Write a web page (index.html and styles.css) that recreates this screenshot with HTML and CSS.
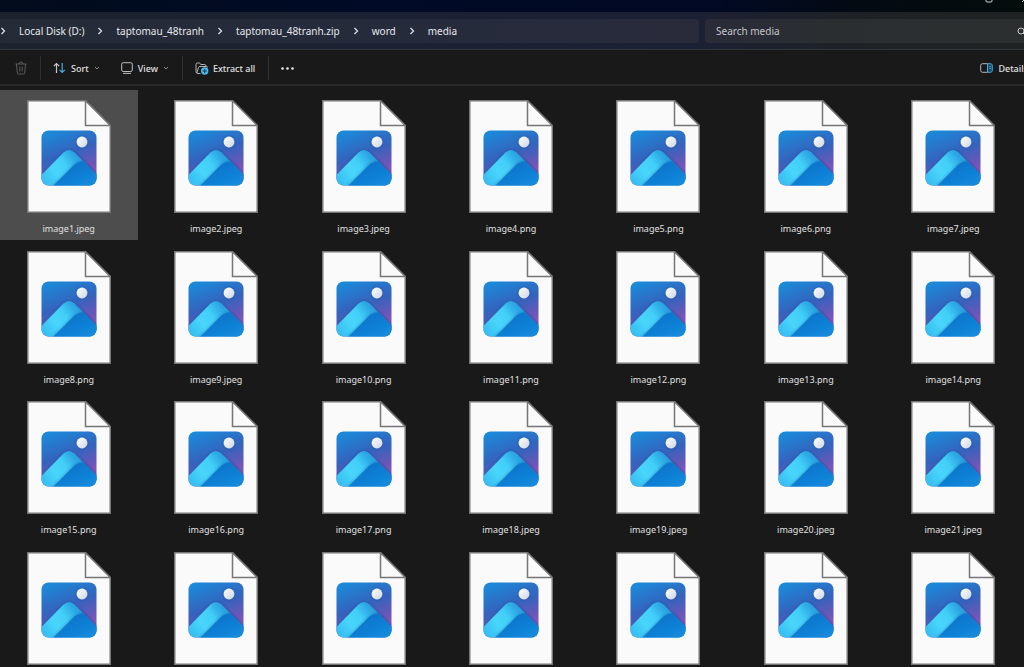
FILE: index.html
```
<!DOCTYPE html>
<html lang="en">
<head>
<meta charset="utf-8">
<title>media</title>
<link rel="stylesheet" href="styles.css">
</head>
<body>
<svg class="defs" aria-hidden="true">
  <defs>
    <linearGradient id="sky" x1="0.3" y1="0" x2="0.62" y2="0.85">
      <stop offset="0" stop-color="#1c88d8"/><stop offset="0.5" stop-color="#3563bd"/><stop offset="0.85" stop-color="#6b57b8"/><stop offset="1" stop-color="#8158bb"/>
    </linearGradient>
    <linearGradient id="slope" x1="0.9" y1="0.4" x2="0.1" y2="0.8">
      <stop offset="0" stop-color="#1f90d8"/><stop offset="0.25" stop-color="#30aee8"/><stop offset="0.45" stop-color="#42cff8"/><stop offset="0.7" stop-color="#48d5fb"/><stop offset="1" stop-color="#38bff2"/>
    </linearGradient>
    <linearGradient id="front" x1="0.3" y1="0.2" x2="0.9" y2="1">
      <stop offset="0" stop-color="#0f74cc"/><stop offset="1" stop-color="#1390e0"/>
    </linearGradient>
    <linearGradient id="sun" x1="0" y1="0" x2="1" y2="1">
      <stop offset="0" stop-color="#ffffff"/><stop offset="1" stop-color="#ced5e4"/>
    </linearGradient>
    <filter id="shade" x="-20%" y="-20%" width="140%" height="140%"><feDropShadow dx="0" dy="0" stdDeviation="1.5" flood-color="#123a80" flood-opacity="0.5"/></filter>
    <clipPath id="frame"><rect x="14.5" y="30.5" width="55" height="55" rx="7"/></clipPath>
    <symbol id="picture" viewBox="0 0 84 113">
      <path d="M.75.75H58.5L83.25 25.5V112.25H.75Z" fill="#fafafa" stroke="#767676" stroke-width="1.5"/>
      <path d="M58.5.75V25.5H83.25Z" fill="#fafafa" stroke="#767676" stroke-width="1.5"/>
      <g clip-path="url(#frame)">
        <rect x="14" y="30" width="56" height="56" fill="url(#sky)"/>
        <path d="M12 77.500L36.500 52.500Q42 47.500 47.500 52.500L72 77V90H12Z" fill="url(#slope)" filter="url(#shade)"/>
        <path d="M23 89L45.500 66.500Q50 61.500 56.500 61.500L72 77V90H23Z" fill="url(#front)" filter="url(#shade)"/>
        <circle cx="55" cy="42" r="5.400" fill="url(#sun)" filter="url(#shade)"/>
      </g>
    </symbol>
    <symbol id="next" viewBox="0 0 6 8"><path d="M1.500 1L4.500 4L1.500 7" fill="none" stroke="#dcdee4" stroke-width="1.300"/></symbol>
    <symbol id="drop" viewBox="0 0 6 4"><path d="M1 1L3 3L5 1" fill="none" stroke="#999" stroke-width="0.900"/></symbol>
  </defs>
</svg>

<div class="window">
  <div class="titlebar">
    <button class="caption" aria-label="Maximize"><svg width="8" height="8" viewBox="0 0 8 8"><rect x="1" y="1" width="6" height="6" rx="1" fill="none" stroke="#d0d0d0"/></svg></button>
    <button class="caption" aria-label="Close"><svg width="8" height="8" viewBox="0 0 8 8"><path d="M1 1L7 7M7 1L1 7" stroke="#d0d0d0"/></svg></button>
  </div>
  <div class="address-row">
    <nav class="address" aria-label="Address">
      <svg class="next"><use href="#next"/></svg>
      <a href="#">Local Disk (D:)</a>
      <svg class="next"><use href="#next"/></svg>
      <a href="#">taptomau_48tranh</a>
      <svg class="next"><use href="#next"/></svg>
      <a href="#">taptomau_48tranh.zip</a>
      <svg class="next"><use href="#next"/></svg>
      <a href="#">word</a>
      <svg class="next"><use href="#next"/></svg>
      <a href="#">media</a>
    </nav>
    <div class="search">
      <input type="text" placeholder="Search media" aria-label="Search media">
      <svg width="9" height="9" viewBox="0 0 9 9" fill="none" stroke="#ccc"><circle cx="4" cy="4" r="3"/><path d="M6 6L8.500 8.500"/></svg>
    </div>
  </div>
  <div class="toolbar">
    <button class="tool" aria-label="Delete"><svg width="12" height="14" viewBox="0 0 12 14" fill="none" stroke="#5c5c5c"><path d="M.5 3H11.500M4 3Q4 1 6 1Q8 1 8 3M1.500 3L2.300 12Q2.400 13 3.500 13H8.500Q9.600 13 9.700 12L10.500 3M4.800 5.500V10.500M7.200 5.500V10.500"/></svg></button>
    <span class="rule"></span>
    <button class="tool sort"><svg width="13" height="12" viewBox="0 0 13 12" fill="none" stroke-width="1.200"><path d="M3.500 11V1.500M.8 4.200L3.500 1.500L6.200 4.200" stroke="#c5c5c5"/><path d="M9.200 1V10.500M6.500 7.800L9.200 10.500L11.900 7.800" stroke="#4ba9d6"/></svg>Sort<svg class="drop"><use href="#drop"/></svg></button>
    <button class="tool view"><svg width="12" height="12" viewBox="0 0 12 12" fill="none" stroke="#bdbdbd"><rect x=".7" y=".7" width="10.600" height="8.800" rx="1.500"/><path d="M2 11.400H10"/></svg>View<svg class="drop"><use href="#drop"/></svg></button>
    <span class="rule"></span>
    <button class="tool extract"><svg width="14" height="13" viewBox="0 0 14 13" fill="none"><path d="M5.500 11.500H3Q1 11.500 1 9.500V2.500Q1 1 2.500 1H4.300L6 2.500H9.500Q11 2.500 11 4M1.800 11L3.500 5.500Q3.800 4.500 5 4.500H11.500Q12.700 4.500 12.500 5.500" stroke="#b5b5b5"/><circle cx="9.700" cy="9" r="3.700" fill="#4cb8f0"/><path d="M9.700 6.800V11.200M7.500 9H11.900" stroke="#103850"/></svg>Extract all</button>
    <span class="rule"></span>
    <button class="tool more" aria-label="See more"><svg width="13" height="3" viewBox="0 0 13 3" fill="#ececec"><circle cx="1.500" cy="1.500" r="1.300"/><circle cx="6.500" cy="1.500" r="1.300"/><circle cx="11.500" cy="1.500" r="1.300"/></svg></button>
    <button class="tool details"><svg width="13" height="10" viewBox="0 0 13 10" fill="none"><path d="M7.500.7H2.500Q.7.700.7 2.500V7.500Q.7 9.300 2.500 9.300H7.500" stroke="#b5b5b5"/><path d="M7.500.7H10.500Q12.300.7 12.300 2.500V7.500Q12.300 9.300 10.500 9.300H7.500Z" fill="#164b69" stroke="#4ba9d6"/><path d="M9.300 3.500H10.800M9.300 5.500H10.800" stroke="#4ba9d6"/></svg>Details</button>
  </div>
</div>

<main class="files">
  <button class="file selected"><svg><use href="#picture"/></svg><span>image1.jpeg</span></button>
  <button class="file"><svg><use href="#picture"/></svg><span>image2.jpeg</span></button>
  <button class="file"><svg><use href="#picture"/></svg><span>image3.jpeg</span></button>
  <button class="file"><svg><use href="#picture"/></svg><span>image4.png</span></button>
  <button class="file"><svg><use href="#picture"/></svg><span>image5.png</span></button>
  <button class="file"><svg><use href="#picture"/></svg><span>image6.png</span></button>
  <button class="file"><svg><use href="#picture"/></svg><span>image7.jpeg</span></button>
  <button class="file"><svg><use href="#picture"/></svg><span>image8.png</span></button>
  <button class="file"><svg><use href="#picture"/></svg><span>image9.jpeg</span></button>
  <button class="file"><svg><use href="#picture"/></svg><span>image10.png</span></button>
  <button class="file"><svg><use href="#picture"/></svg><span>image11.png</span></button>
  <button class="file"><svg><use href="#picture"/></svg><span>image12.png</span></button>
  <button class="file"><svg><use href="#picture"/></svg><span>image13.png</span></button>
  <button class="file"><svg><use href="#picture"/></svg><span>image14.png</span></button>
  <button class="file"><svg><use href="#picture"/></svg><span>image15.png</span></button>
  <button class="file"><svg><use href="#picture"/></svg><span>image16.png</span></button>
  <button class="file"><svg><use href="#picture"/></svg><span>image17.png</span></button>
  <button class="file"><svg><use href="#picture"/></svg><span>image18.jpeg</span></button>
  <button class="file"><svg><use href="#picture"/></svg><span>image19.jpeg</span></button>
  <button class="file"><svg><use href="#picture"/></svg><span>image20.jpeg</span></button>
  <button class="file"><svg><use href="#picture"/></svg><span>image21.jpeg</span></button>
  <button class="file" aria-label="Image file"><svg><use href="#picture"/></svg></button>
  <button class="file" aria-label="Image file"><svg><use href="#picture"/></svg></button>
  <button class="file" aria-label="Image file"><svg><use href="#picture"/></svg></button>
  <button class="file" aria-label="Image file"><svg><use href="#picture"/></svg></button>
  <button class="file" aria-label="Image file"><svg><use href="#picture"/></svg></button>
  <button class="file" aria-label="Image file"><svg><use href="#picture"/></svg></button>
  <button class="file" aria-label="Image file"><svg><use href="#picture"/></svg></button>
</main>
</body>
</html>
```
FILE: styles.css
```
* { box-sizing: border-box; }
body {
  margin: 0;
  height: 100vh;
  overflow: hidden;
  background: #191919;
  color: #e0e0e0;
  font-family: "Noto Sans", "Open Sans", sans-serif;
  font-size: 9px;
}
button, input {
  border: 0;
  padding: 0;
  background: none;
  color: inherit;
  font: inherit;
}
svg { flex: none; }
.defs { position: absolute; width: 0; height: 0; }

/* The window runs on past the right edge of the screen. */
.window { margin-right: -24px; }

.titlebar {
  display: flex;
  justify-content: flex-end;
  align-items: flex-start;
  gap: 28px;
  height: 12px;
  padding-right: 19px;
  background: linear-gradient(90deg, #020c1c, #010a26 35%, #010924 68%, #030a12 82%, #040c0a);
}
.caption { height: 8px; margin-top: -5px; line-height: 0; }

.address-row {
  display: flex;
  gap: 6px;
  height: 38px;
  padding: 7px 0 6px;
  background: linear-gradient(90deg, #1c232d, #1b2233 35%, #1c2034 66%, #1e2227 80%, #1f2322);
  border-bottom: 1px solid #323437;
}
.address {
  display: flex;
  flex: 1;
  align-items: center;
  gap: 13px;
  border-radius: 0 4px 4px 0;
  background: linear-gradient(90deg, #252b36, #252b3b 50%, #292b3b);
  font-size: 10px;
}
.address a { color: #e6e8ec; text-decoration: none; }
.next { width: 6px; height: 8px; }
.search {
  display: flex;
  align-items: center;
  width: 343px;
  padding: 0 22px 0 11px;
  border-radius: 4px;
  background: linear-gradient(90deg, #292b38, #2a2e31 35%, #2b2f2e);
}
.search input { flex: 1; min-width: 0; font-size: 10px; }
.search input::placeholder { color: #c4c6ca; opacity: 1; }

.toolbar {
  display: flex;
  align-items: center;
  height: 36px;
  padding: 2px 20px 0 15px;
  border-bottom: 2px solid #292929;
}
.tool { display: flex; align-items: center; gap: 5px; font-weight: 500; white-space: nowrap; }
.rule { width: 1px; height: 24px; margin: 0 12px 0 13px; background: #303030; }
.drop { width: 6px; height: 4px; }
.view { margin-left: 21px; }
.extract { gap: 4px; }
.more { height: 20px; }
.details { margin-left: auto; }

.files {
  display: grid;
  grid-template-columns: repeat(7, minmax(0, 1fr));
  grid-auto-rows: 150px 149px;
  gap: 1px 8px;
  margin: 4px 1px 0 -1px;
}
.file {
  display: flex;
  flex-direction: column;
  align-items: center;
  gap: 9px;
  padding-top: 10px;
  line-height: 14px;
}
.file svg { width: 84px; height: 113px; }
.selected { background: #4d4d4d; }
```
